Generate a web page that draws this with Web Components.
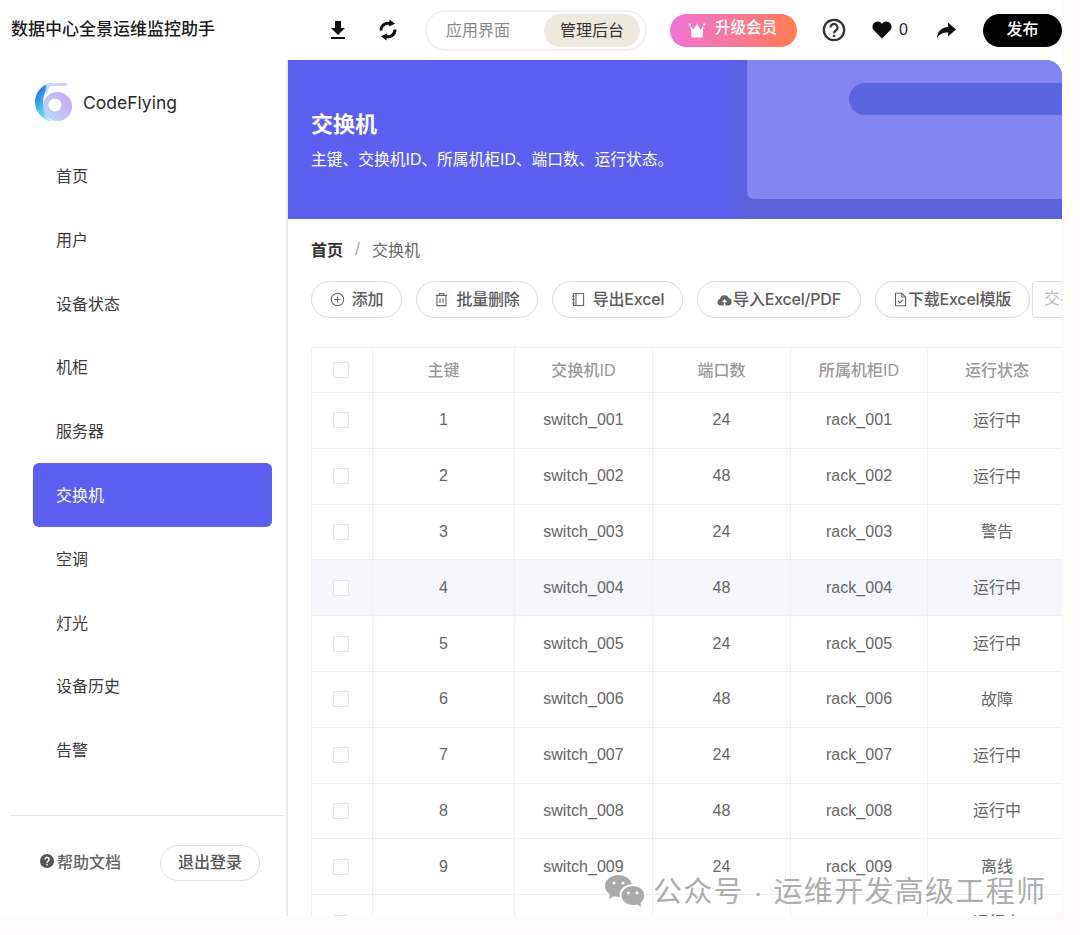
<!DOCTYPE html>
<html lang="zh">
<head>
<meta charset="utf-8">
<title>数据中心全景运维监控助手</title>
<style>
html,body{margin:0;padding:0;height:935px;overflow:hidden;background:#fefcf9;font-family:"Liberation Sans","Noto Sans CJK SC",sans-serif;}
</style>
</head>
<body>
<app-shell>
  <app-header slot="header" title-text="数据中心全景运维监控助手"></app-header>
  <side-nav slot="side">
    <nav-item>首页</nav-item>
    <nav-item>用户</nav-item>
    <nav-item>设备状态</nav-item>
    <nav-item>机柜</nav-item>
    <nav-item>服务器</nav-item>
    <nav-item active>交换机</nav-item>
    <nav-item>空调</nav-item>
    <nav-item>灯光</nav-item>
    <nav-item>设备历史</nav-item>
    <nav-item>告警</nav-item>
  </side-nav>
  <page-banner slot="main" heading="交换机">主键、交换机ID、所属机柜ID、端口数、运行状态。</page-banner>
  <bread-crumb slot="main" root="首页" leaf="交换机"></bread-crumb>
  <tool-bar slot="main">
    <tool-button wide="91"><svg slot="icon" width="15" height="15" viewBox="0 0 15 15" fill="none" stroke="#666" stroke-width="1.1"><circle cx="7.5" cy="7.5" r="6.2"/><path d="M7.5 4.6v5.8M4.6 7.5h5.8"/></svg>添加</tool-button>
    <tool-button wide="122"><svg slot="icon" width="15" height="15" viewBox="0 0 15 15" fill="none" stroke="#666" stroke-width="1.1"><path d="M1.8 3.4h11.4M5.4 3.2V1.5h4.2v1.7M3 3.6v10h9v-10M6 6.2v4.8M9 6.2v4.8"/></svg>批量删除</tool-button>
    <tool-button wide="131"><svg slot="icon" width="15" height="15" viewBox="0 0 15 15" fill="none" stroke="#666" stroke-width="1.1"><path d="M2.6 1.5h10v12h-10zM5 1.5v12M1.2 4h2.4M1.2 7.5h2.4M1.2 11h2.4"/></svg>导出Excel</tool-button>
    <tool-button wide="164" tight><svg slot="icon" width="15" height="12" viewBox="0 0 15 12"><path fill="#666" d="M3.6 11.5A3.3 3.3 0 0 1 3 5a4.6 4.6 0 0 1 8.8-.9A3.8 3.8 0 0 1 11.5 11.500H8.300V7.900h1.700L7.500 5 5 7.900h1.700v3.600z"/></svg>导入Excel/PDF</tool-button>
    <tool-button wide="155" tight><svg slot="icon" width="13" height="15" viewBox="0 0 13 15" fill="none" stroke="#666" stroke-width="1.100"><path d="M1.500 1.200h6.300l3.800 3.800v8.800H1.500zM7.800 1.200V5h3.800M4 9l1.900 1.900L9 7.800"/></svg>下载Excel模版</tool-button>
    <search-box placeholder="交换机ID"></search-box>
  </tool-bar>
  <data-table slot="main"></data-table>
  <water-mark slot="over">公众号 · 运维开发高级工程师</water-mark>
</app-shell>
<script>
const FONT='"Liberation Sans","Noto Sans CJK SC",sans-serif';
const FONT_UI='Inter,"Noto Sans CJK SC",sans-serif';
function el(name,render){
  customElements.define(name,class extends HTMLElement{
    constructor(){super();this.attachShadow({mode:'open'});}
    connectedCallback(){this.shadowRoot.innerHTML=render(this);}
  });
}
el('app-shell',()=>`<style>
:host{display:block;position:relative;width:1080px;height:935px;overflow:hidden}
.frame{width:1062px;height:916px;display:flex;flex-direction:column;background:#fff;overflow:hidden}
.body{flex:1;min-height:0;display:flex}
.main{width:774px;min-width:0;overflow:hidden;display:flex;flex-direction:column}
</style>
<div class="frame"><slot name="header"></slot>
<div class="body"><slot name="side"></slot><div class="main"><slot name="main"></slot></div></div></div>
<slot name="over"></slot>`);

el('app-header',h=>`<style>
:host{display:flex;align-items:center;height:60px;flex:none;background:#fff;font-family:${FONT}}
h1{margin:0 0 0 11px;width:204px;font-size:17px;font-weight:500;color:#1c1c1c;white-space:nowrap;line-height:60px}
.ic{display:flex;align-items:center;justify-content:center}
.seg{margin-left:28px;width:222px;height:41px;box-sizing:border-box;border:2px solid #f4f0ea;border-radius:21px;display:flex;align-items:center;font-size:16px;color:#8a8a8a}
.seg span{display:block}
.seg .off{margin-left:19px;width:98px;padding-bottom:2px}
.seg .on{width:96px;height:33px;line-height:33px;text-align:center;background:#efe8df;border-radius:17px;color:#333}
.up{margin-left:23px;width:127px;height:33px;border-radius:17px;background:linear-gradient(90deg,#ee74d6,#fb7a8d 60%,#ff7c4c);display:flex;align-items:center;color:#fff;font-size:15.500px;font-weight:500}
.up svg{margin:0 9px 0 18px}
.up span{padding-bottom:5px;line-height:22px}
.n{font-size:16px;color:#222;margin-left:7px}
.pub{margin-left:27px;width:79px;height:33px;border-radius:17px;background:#000;color:#fff;text-align:center;line-height:32px;font-size:16px;font-weight:500}
</style>
<h1>${h.getAttribute('title-text')}</h1>
<span class="ic" style="margin-left:115px;width:16px"><svg width="16" height="20" viewBox="0 0 16 20"><path fill="#111" d="M5 1h6v7h4l-7 7-7-7h4z"/><rect x="1" y="17" width="14" height="2" fill="#111"/></svg></span>
<span class="ic" style="margin-left:33px;width:18px"><svg width="18" height="22" viewBox="0 0 18 22" fill="none"><path stroke="#111" stroke-width="3" d="M2 11.500A7 7 0 0 1 12.500 5.200M16 10.500A7 7 0 0 1 5.500 16.800"/><path fill="#111" d="M10.500 .500l5.500 4.300-6.200 2.800zM7.500 21.500l-5.500-4.300 6.200-2.800z"/></svg></span>
<div class="seg"><span class="off">应用界面</span><span class="on">管理后台</span></div>
<div class="up"><svg width="18" height="17" viewBox="0 0 18 17"><path fill="#fff" d="M2.500 4l3.200 3.700L9 1.500l3.300 6.200L15.500 4 14.500 15.500h-11z"/><circle cx="1.800" cy="2.600" r="1.200" fill="#fff"/><circle cx="16.200" cy="2.600" r="1.200" fill="#fff"/></svg><span>升级会员</span></div>
<span class="ic" style="margin-left:25px;width:24px"><svg width="24" height="24" viewBox="0 0 24 24" fill="none"><circle cx="12" cy="12" r="10.200" stroke="#333" stroke-width="2.300"/><path stroke="#333" stroke-width="2.200" d="M8.500 9.500a3.500 3.500 0 1 1 5.300 3c-1.300.8-1.800 1.300-1.800 2.800"/><circle cx="12" cy="18" r="1.300" fill="#333"/></svg></span>
<span class="ic" style="margin-left:26px;width:20px"><svg width="20" height="18" viewBox="0 0 20 18"><path fill="#0c0c0c" d="M10 17.500 1.800 9.300A5.200 5.200 0 0 1 9.200 2L10 2.800l.8-.8a5.200 5.200 0 0 1 7.400 7.300z"/></svg></span>
<span class="n">0</span>
<span class="ic" style="margin-left:28px;width:20px"><svg width="20" height="17" viewBox="0 0 20 17"><path fill="#111" d="M12 .500 20 7.500l-8 7v-4c-4.500 0-8 .8-11 5.500.4-6.500 4.500-10.500 11-11z"/></svg></span>
<div class="pub">发布</div>`);

el('side-nav',()=>`<style>
:host{display:flex;flex-direction:column;flex:none;width:288px;box-sizing:border-box;border-right:2px solid #ececee;background:#fff;font-family:${FONT}}
.logo{height:84px;display:flex;align-items:center;padding-left:35px;gap:11px;font-size:17.500px;color:#2a2a2a}
.logo span{font-family:Inter,"Liberation Sans",sans-serif}
nav{display:flex;flex-direction:column}
.foot{margin:auto 2px 0 10px;height:101px;border-top:1px solid #e6e6e8;box-sizing:border-box;display:flex;align-items:center;padding:0 24px 7px 30px}
.help{display:flex;align-items:center;gap:3px;color:#666;font-size:16px;font-weight:500;padding-bottom:3px}
.out{margin-left:auto;width:100px;height:36px;box-sizing:border-box;border:1px solid #dedede;border-radius:18px;text-align:center;line-height:33px;color:#555;font-size:16px;font-weight:500}
</style>
<div class="logo"><svg width="37" height="40" viewBox="0 0 37 40" fill="none">
<defs><linearGradient id="a" x1="0.200" y1="0" x2="0.600" y2="1"><stop offset="0" stop-color="#2f62ee"/><stop offset=".5" stop-color="#36aeee"/><stop offset="1" stop-color="#a6e8f3"/></linearGradient>
<linearGradient id="b" x1="0" y1="1" x2="1" y2="0"><stop offset="0" stop-color="#b4e0f6"/><stop offset="1" stop-color="#cfa4f3"/></linearGradient></defs>
<circle cx="22.500" cy="24.500" r="14.500" fill="url(#b)"/>
<circle cx="20" cy="23" r="6.500" fill="#fff"/>
<path fill="url(#a)" d="M17 1C6 2.500 0 11 0 20c0 10 8 19 18 19.500-6-3-10-9-10-17.500C8 13 11 6 17 1z"/>
<path fill="#c9d3f7" d="M11 2 32 .500l-1 3.500H16.500c-2 0-4 4-4.500 9-1.500-1-1.500-7-1-11z"/></svg><span>CodeFlying</span></div>
<nav><slot></slot></nav>
<div class="foot"><span class="help"><svg width="14" height="14" viewBox="0 0 14 14"><circle cx="7" cy="7" r="7" fill="#555"/><path fill="none" stroke="#fff" stroke-width="1.500" d="M5 5.400a2 2 0 1 1 3 1.700c-.7.400-1 .8-1 1.600"/><circle cx="7" cy="10.700" r=".9" fill="#fff"/></svg>帮助文档</span><span class="out">退出登录</span></div>`);

el('nav-item',h=>{const a=h.hasAttribute('active');return `<style>
:host{display:block;margin-left:33px;width:239px;height:63.800px;box-sizing:border-box;padding-left:23px;line-height:65px;font-size:16px;font-family:${FONT};
color:${a?'#fff':'#3a3a3a'};background:${a?'#5a5ff0':'transparent'};border-radius:6px}
</style><slot></slot>`});

el('page-banner',h=>`<style>
:host{display:block;position:relative;flex:none;height:159px;overflow:hidden;border-radius:0 16px 0 0;background:linear-gradient(90deg,#5b5fef 0,#5b5fef 430px,#5a62dc 459px);font-family:${FONT};color:#fff}
.panel{position:absolute;left:459px;right:0;top:0;height:139px;background:#8385f2;border-bottom-left-radius:7px}
.bar{position:absolute;left:561px;right:-20px;top:23px;height:32px;border-radius:16px;background:#5965e1}
.tx{position:relative;padding:51px 0 0 23px}
h2{margin:0;font-size:22px;font-weight:700;line-height:28px}
p{margin:10px 0 0;font-size:15.750px;line-height:22px}
</style><div class="panel"></div><div class="bar"></div>
<div class="tx"><h2>${h.getAttribute('heading')}</h2><p><slot></slot></p></div>`);

el('bread-crumb',h=>`<style>
:host{display:flex;flex:none;align-items:center;height:22px;margin:19px 0 0 23px;font-size:16px;font-family:${FONT};color:#666}
b{color:#333;font-weight:700}
i{font-style:normal;color:#aaa;margin:0 12px;font-size:18px;padding-top:1px}
</style><b>${h.getAttribute('root')}</b><i>/</i><span>${h.getAttribute('leaf')}</span>`);

el('tool-bar',()=>`<style>
:host{display:flex;flex:none;height:37px;margin:21px 0 29px 23px;gap:14px;white-space:nowrap;overflow:visible}
</style><slot></slot>`);

el('tool-button',h=>`<style>
:host{display:flex;flex:none;align-items:center;justify-content:center;gap:${h.hasAttribute('tight')?1:7}px;width:${h.getAttribute('wide')}px;height:37px;box-sizing:border-box;border:1px solid #dcdcdc;border-radius:19px;background:#fff;color:#5c5c5c;font-size:15.500px;font-weight:500;font-family:${FONT_UI}}
span{padding-bottom:3px;font-size:16px;letter-spacing:-.2px}
</style><slot name="icon"></slot><span><slot></slot></span>`);

el('search-box',h=>`<style>
:host{display:block;flex:none;width:140px;height:37px;margin-left:-12px;box-sizing:border-box;border:1px solid #dcdcdc;border-radius:4px;padding-left:11px;line-height:33px;color:#bbb;font-size:16px;font-family:${FONT}}
</style>${h.getAttribute('placeholder')}`);

el('data-table',()=>{
  const st=['运行中','运行中','警告','运行中','运行中','故障','运行中','运行中','离线','运行中'];
  const head=['主键','交换机ID','端口数','所属机柜ID','运行状态'];
  const box='<span class="box"></span>';
  let cells=`<div class="c h">${box}</div>`+head.map(t=>`<div class="c h cj">${t}</div>`).join('');
  st.forEach((s,i)=>{
    const n=String(i+1).padStart(3,'0');
    const hi=i===3?' hi':'';
    cells+=[box,i+1,'switch_'+n,i%2?48:24,'rack_'+n].map(v=>`<div class="c${hi}">${v}</div>`).join('')+`<div class="c cj${hi}">${s}</div>`;
  });
  return `<style>
:host{display:block;flex:none;margin-left:23px;width:756px;font-family:${FONT}}
.g{display:grid;grid-template-columns:61px 142px 138px 138px 137px 139px;grid-template-rows:45px repeat(10,55.800px);border-top:1px solid #f0f0f3;border-left:1px solid #f0f0f3}
.c{display:flex;align-items:center;justify-content:center;box-sizing:border-box;border-right:1px solid #f0f0f3;border-bottom:1px solid #f0f0f3;font-size:16px;color:#666;letter-spacing:.05px}
.cj{padding-bottom:3px}
.h{color:#9a9a9a;font-weight:500}
.hi{background:#f5f7fb}
.box{width:16px;height:16px;box-sizing:border-box;border:1px solid #e4e4e6;border-radius:2px;background:#fff;position:relative;left:-1px}
</style><div class="g">${cells}</div>`;
});

el('water-mark',()=>`<style>
:host{position:absolute;left:605px;top:874px;display:flex;align-items:center;gap:8px;font-family:${FONT};font-size:29px;letter-spacing:1.300px;color:rgba(120,120,120,.62);white-space:nowrap;height:34px}
span{padding-bottom:4px}
</style><svg width="40" height="33" viewBox="0 0 40 33" style="flex:none"><path fill="#aaa" d="M13.500 0C6 0 0 5 0 11c0 3.500 2 6.500 5 8.500L4 24l5-2.700c1.500.400 3 .600 4.500.600C21 22 27 17 27 11S21 0 13.500 0z"/><path fill="#fff" d="M28 9c-7 0-13.500 4.500-13.500 11S21 31 28 31c1.300 0 2.500 0 4-.500l5 2.500-1-4c2.500-1.700 4.500-5 4.500-8.500C40.500 14 35 9 28 9z"/><path fill="#aaa" d="M28 11c-6 0-11.500 4-11.500 9.500S22 30 28 30c1.300 0 2.700-.200 4-.600l4.300 2.600-1-4c2.400-1.800 4-4.300 4-7.500C39.300 15 34 11 28 11z"/><circle cx="9" cy="8" r="1.600" fill="#fff"/><circle cx="18" cy="8" r="1.600" fill="#fff"/><circle cx="23.500" cy="18" r="1.400" fill="#fff"/><circle cx="32" cy="18" r="1.400" fill="#fff"/></svg><span><slot></slot></span>`);
</script>
</body>
</html>
